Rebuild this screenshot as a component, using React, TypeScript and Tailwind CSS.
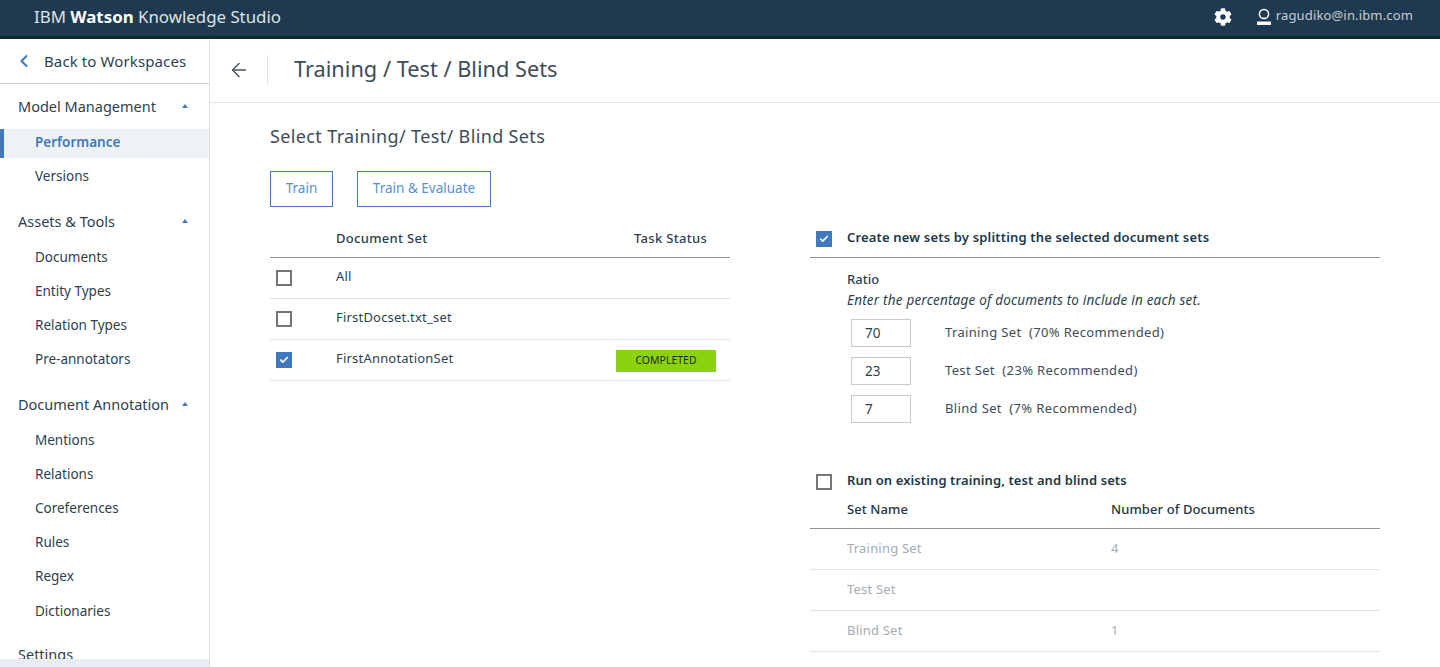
import { ChevronLeft, ArrowLeft, Check } from "lucide-react";
import { FaCog } from "react-icons/fa";

const font = "font-['Noto_Sans',sans-serif]";

function Checkbox({ checked }: { checked?: boolean }) {
  return checked ? (
    <span className="flex h-4 w-4 items-center justify-center bg-[#4178be]">
      <Check size={10} strokeWidth={4} className="text-white" />
    </span>
  ) : (
    <span className="block h-4 w-4 border-2 border-[#777677]" />
  );
}

function SectionTitle({ label }: { label: string }) {
  return (
    <div className="flex h-5 w-[188px] items-center justify-between pl-[18px] text-[14.5px] leading-5 text-[#2d3f4f]">
      <span>{label}</span>
      <span className="h-0 w-0 border-x-[3.5px] border-b-[4px] border-x-transparent border-b-[#4178be]" />
    </div>
  );
}

function NavItem({ label, active }: { label: string; active?: boolean }) {
  if (active) {
    return (
      <div className="flex h-[29px] items-center border-l-4 border-[#4178be] bg-[#eff2f5] pb-[2px] pl-[31px] text-[13.5px] font-semibold text-[#4178be]">
        {label}
      </div>
    );
  }
  return <div className="flex h-[34px] items-center pl-[35px] text-[13.5px] text-[#2d3f4f]">{label}</div>;
}

function Sidebar() {
  return (
    <aside className="relative h-[628px] w-[210px] shrink-0 overflow-hidden border-r border-[#dfe3e6] bg-white">
      <div className="flex h-[45px] items-center border-b border-[#c9cdd0] pl-[14px] text-[15px] tracking-[0.11px] text-[#2d3f4f]">
        <ChevronLeft size={20} strokeWidth={2.5} className="mr-[10px] text-[#4178be]" />
        Back to Workspaces
      </div>
      <div className="pt-[12px]">
        <SectionTitle label="Model Management" />
        <div className="mt-[13px]">
          <NavItem label="Performance" active />
          <div className="mt-px">
            <NavItem label="Versions" />
          </div>
        </div>
      </div>
      <div className="pt-[18px]">
        <SectionTitle label="Assets & Tools" />
        <div className="mt-[9px]">
          <NavItem label="Documents" />
          <NavItem label="Entity Types" />
          <NavItem label="Relation Types" />
          <NavItem label="Pre-annotators" />
        </div>
      </div>
      <div className="pt-[18px]">
        <SectionTitle label="Document Annotation" />
        <div className="mt-[9px]">
          <NavItem label="Mentions" />
          <NavItem label="Relations" />
          <NavItem label="Coreferences" />
          <NavItem label="Rules" />
          <NavItem label="Regex" />
          <div className="mt-px">
            <NavItem label="Dictionaries" />
          </div>
        </div>
      </div>
      <div className="pl-[18px] pt-[16px] text-[14.5px] leading-5 text-[#2d3f4f]">Settings</div>
      <div className="absolute inset-x-0 bottom-0 h-2 bg-[#e8ecf4]" />
    </aside>
  );
}

function DocRow({ label, checked, status }: { label: string; checked?: boolean; status?: string }) {
  return (
    <div className="flex h-[41px] items-center border-b border-[#dfe3e6] pl-[6px]">
      <Checkbox checked={checked} />
      <span className="ml-[44px] -translate-y-[1px] text-[13px] tracking-[0.2px] text-[#2d3f4f]">{label}</span>
      {status && (
        <span className="ml-auto mr-[14px] flex h-[22px] w-[100px] translate-y-[1px] items-center justify-center bg-[#8cd211] text-[10.5px] text-[#1d2b12]">
          {status}
        </span>
      )}
    </div>
  );
}

function RatioRow({ value, label }: { value: string; label: string }) {
  return (
    <div className="flex h-[28px] items-center">
      <span className="flex h-[28px] w-[60px] items-center border border-[#c7cbce] pl-[13px] text-[13.5px] text-[#2d3f4f]">
        {value}
      </span>
      <span className="ml-[34px] whitespace-pre text-[13px] tracking-[0.35px] text-[#3d4c59]">{label}</span>
    </div>
  );
}

function SetRow({ name, count }: { name: string; count: string }) {
  return (
    <div className="flex h-[41px] items-center border-b border-[#dfe3e6] pl-[37px] text-[13px] tracking-[0.2px] text-[#a4acb3]">
      <span className="w-[264px]">{name}</span>
      <span>{count}</span>
    </div>
  );
}

export default function App() {
  return (
    <div className={`${font} h-[667px] w-[1440px] overflow-hidden bg-white`}>
      <header className="flex h-[39px] items-center border-b-[3px] border-[#14282f] bg-[#1f3a50] pl-[34px] pr-[27px]">
        <div className="-translate-y-[1px] text-[16.85px] text-[#dde3e8]">
          IBM <span className="font-bold text-white">Watson</span> Knowledge Studio
        </div>
        <div className="ml-auto flex items-center">
          <FaCog size={18} className="-translate-y-[1px] text-white" />
          <svg width="16" height="18" viewBox="0 0 16 18" className="ml-[24px] -translate-y-[1px]" fill="none">
            <circle cx="8" cy="6" r="4.6" stroke="#fff" strokeWidth="1.5" />
            <path d="M1.5 13.5h13a.5.5 0 0 1 .5.5v3H1v-3a.5.5 0 0 1 .5-.5Z" fill="#fff" />
          </svg>
          <span className="ml-[4px] -translate-y-[2px] text-[13px] tracking-[0.15px] text-[#c5ccd2]">ragudiko@in.ibm.com</span>
        </div>
      </header>
      <div className="flex">
        <Sidebar />
        <main className="min-w-0 flex-1">
          <div className="flex h-[64px] items-center border-b border-[#dfe3e6] pb-[2px] pl-[18px]">
            <ArrowLeft size={22} strokeWidth={1.6} className="text-[#4d5358]" />
            <span className="ml-[17px] h-[30px] w-px bg-[#dfe3e6]" />
            <h1 className="ml-[26px] text-[21.75px] text-[#3d4c59]">Training / Test / Blind Sets</h1>
          </div>
          <div className="pl-[60px]">
            <h2 className="pt-[21px] text-[18px] leading-[24px] tracking-[0.36px] text-[#3d4c59]">Select Training/ Test/ Blind Sets</h2>
            <div className="mt-[23px] flex gap-[24px]">
              <button className="h-9 w-[63px] border border-[#4178be] pb-[2px] text-[13.5px] text-[#5a8fd0]">Train</button>
              <button className="h-9 w-[134px] border border-[#4178be] pb-[2px] text-[13.5px] text-[#5a8fd0]">Train &amp; Evaluate</button>
            </div>
            <div className="flex gap-[80px]">
              <section className="w-[460px]">
                <div className="flex h-[51px] items-center border-b border-[#8d9396] pt-[14px] text-[13px] font-medium tracking-[0.3px] text-[#2d3f4f]">
                  <span className="ml-[66px]">Document Set</span>
                  <span className="ml-auto mr-[23px]">Task Status</span>
                </div>
                <DocRow label="All" />
                <DocRow label="FirstDocset.txt_set" />
                <DocRow label="FirstAnnotationSet" checked status="COMPLETED" />
              </section>
              <section className="w-[570px]">
                <div className="flex h-[51px] items-center border-b border-[#8d9396] pl-[6px] pt-[14px]">
                  <Checkbox checked />
                  <span className="ml-[15px] -translate-y-[1px] text-[13px] font-semibold tracking-[0.17px] text-[#20374a]">Create new sets by splitting the selected document sets</span>
                </div>
                <div className="pl-[37px] pt-[11px]">
                  <div className="text-[13px] font-medium leading-[20px] text-[#2d3f4f]">Ratio</div>
                  <div className="mt-px text-[13.5px] italic leading-[20px] tracking-[0.2px] text-[#2d3f4f]">Enter the percentage of documents to include in each set.</div>
                </div>
                <div className="flex flex-col gap-[10px] pl-[41px] pt-[9px]">
                  <RatioRow value="70" label="Training Set  (70% Recommended)" />
                  <RatioRow value="23" label="Test Set  (23% Recommended)" />
                  <RatioRow value="7" label="Blind Set  (7% Recommended)" />
                </div>
                <div className="mt-[50px] flex h-4 items-center pl-[6px]">
                  <span className="translate-y-[1px]">
                    <Checkbox />
                  </span>
                  <span className="ml-[15px] text-[13px] font-semibold tracking-[0.1px] text-[#20374a]">Run on existing training, test and blind sets</span>
                </div>
                <div className="mt-[10px] flex h-[30px] items-center border-b border-[#8d9396] pb-[8px] pl-[37px] text-[13px] font-medium tracking-[0.1px] text-[#20374a]">
                  <span className="w-[264px]">Set Name</span>
                  <span>Number of Documents</span>
                </div>
                <SetRow name="Training Set" count="4" />
                <SetRow name="Test Set" count="" />
                <SetRow name="Blind Set" count="1" />
              </section>
            </div>
          </div>
        </main>
      </div>
    </div>
  );
}
